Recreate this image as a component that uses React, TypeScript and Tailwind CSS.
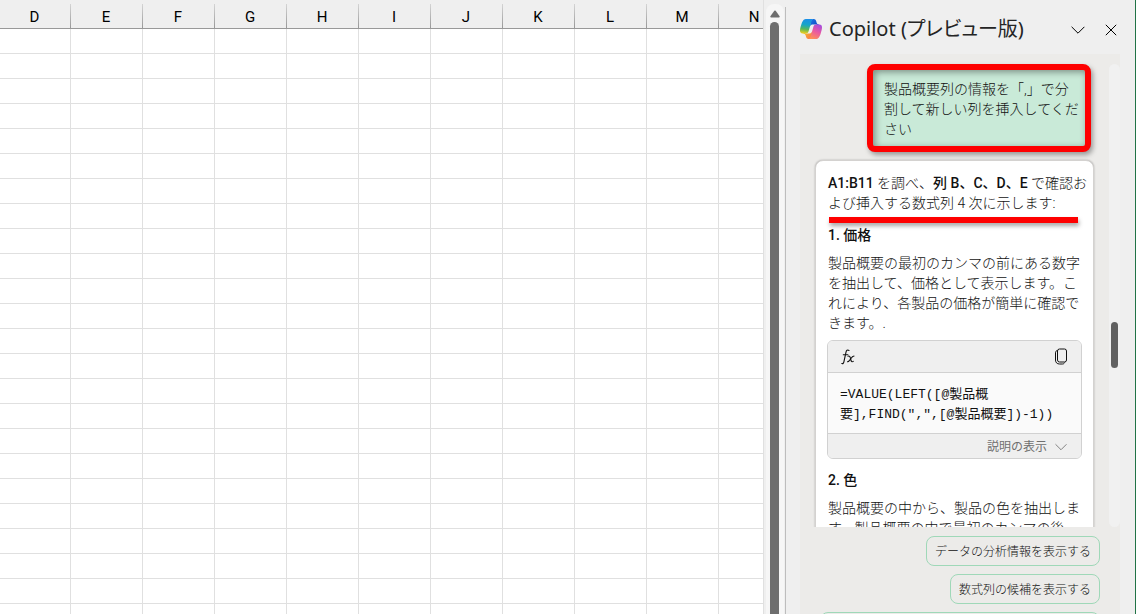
import * as React from "react";

const COLUMNS = ["D", "E", "F", "G", "H", "I", "J", "K", "L", "M", "N"];
const ROW_COUNT = 24;

const SUGGESTIONS = ["データの分析情報を表示する", "数式列の候補を表示する"];

// Icons

function CopilotLogo() {
  return (
    <svg viewBox="0 0 48 48" className="h-6 w-6 shrink-0" aria-hidden="true">
      <defs>
        <linearGradient id="cp-top" x1="38" y1="16" x2="26" y2="5" gradientUnits="userSpaceOnUse">
          <stop offset="0" stopColor="#0a4bc4" />
          <stop offset="1" stopColor="#1b6fe0" />
        </linearGradient>
        <linearGradient id="cp-bottom" x1="10" y1="33" x2="22" y2="44" gradientUnits="userSpaceOnUse">
          <stop offset="0" stopColor="#f4b62b" />
          <stop offset="1" stopColor="#fb7a4b" />
        </linearGradient>
        <linearGradient id="cp-left" x1="15" y1="4" x2="11" y2="33" gradientUnits="userSpaceOnUse">
          <stop offset="0" stopColor="#1a8fe8" />
          <stop offset="0.4" stopColor="#16a5c8" />
          <stop offset="0.7" stopColor="#57b75a" />
          <stop offset="1" stopColor="#f0cf1e" />
        </linearGradient>
        <linearGradient id="cp-right" x1="40" y1="14" x2="26" y2="44" gradientUnits="userSpaceOnUse">
          <stop offset="0" stopColor="#a24be0" />
          <stop offset="0.5" stopColor="#ea5aa0" />
          <stop offset="1" stopColor="#ff9256" />
        </linearGradient>
      </defs>
      <path
        fill="url(#cp-top)"
        d="M34.142 7.325A4.63 4.63 0 0 0 29.7 4h-1.35a4.63 4.63 0 0 0-4.554 3.794L21.48 20.407l.575-1.965a4.63 4.63 0 0 1 4.444-3.33h7.853l3.294 1.282 3.175-1.283h-.926a4.63 4.63 0 0 1-4.443-3.325z"
      />
      <path
        fill="url(#cp-bottom)"
        d="M14.33 40.656A4.63 4.63 0 0 0 18.779 44h2.87a4.63 4.63 0 0 0 4.629-4.51l.312-12.163-.654 2.233a4.63 4.63 0 0 1-4.443 3.329h-7.919l-2.823-1.532-3.057 1.532h.912a4.63 4.63 0 0 1 4.447 3.344z"
      />
      <path
        fill="url(#cp-left)"
        d="M29.5 4H13.46c-4.583 0-7.332 6.057-9.165 12.113C2.123 23.29-.72 32.885 7.503 32.885h6.925a4.63 4.63 0 0 0 4.456-3.358 2077 2077 0 0 1 4.971-17.156c.843-2.843 1.544-5.284 2.621-6.805C27.08 4.714 28.086 4 29.5 4z"
      />
      <path
        fill="url(#cp-right)"
        d="M18.498 44h16.04c4.582 0 7.332-6.058 9.165-12.115 2.172-7.177 5.013-16.775-3.208-16.775h-6.926a4.63 4.63 0 0 0-4.456 3.358 2084 2084 0 0 1-4.972 17.16c-.842 2.844-1.544 5.285-2.62 6.806-.604.852-1.61 1.566-3.023 1.566z"
      />
    </svg>
  );
}

function ChevronDown({ className }: { className: string }) {
  return (
    <svg viewBox="0 0 14 8" className={className} fill="none" stroke="currentColor" aria-hidden="true">
      <path d="M.6.8 7 7.2 13.4.8" />
    </svg>
  );
}

function CloseIcon() {
  return (
    <svg viewBox="0 0 12 12" className="h-3 w-3" fill="none" stroke="currentColor" aria-hidden="true">
      <path d="m.8.8 10.4 10.4M11.2.8.8 11.2" />
    </svg>
  );
}

function FxIcon() {
  return (
    <svg viewBox="0 0 14 16" className="h-4 w-3.5" fill="none" stroke="currentColor" strokeLinecap="round" aria-hidden="true">
      <path strokeWidth="1.1" d="M8 1.4C6.4.5 5.4 1.4 5 3.2L3 12.4c-.3 1.7-1 2.5-2.2 2.1M2.3 5.8h4.6" />
      <path strokeWidth="1.1" d="M7 7.2c1.4-.5 2 .2 2.4 1.8l.5 2c.4 1.6 1.2 2.2 2.4 1.4M13 7c-1.4 0-2 .8-3.3 2.8C8.500 11.800 8 12.700 6.500 12.700" />
    </svg>
  );
}

function CopyIcon() {
  return (
    <svg viewBox="0 0 14 17" className="h-[17px] w-3.5" fill="none" stroke="currentColor" aria-hidden="true">
      <rect x="3.500" y="1" width="9" height="13" rx="2" />
      <path d="M3.500 2.500C2 2.800 1.500 3.500 1.500 4.800v7.200c0 2.500 1.500 4 4 4h2.800c1.200 0 2-.5 2.300-1.500" />
    </svg>
  );
}

// Worksheet

function Sheet() {
  return (
    <div className="min-w-0 flex-1 overflow-hidden border-r border-[#e0e0e0] bg-white">
      <table className="w-[791px] table-fixed border-separate border-spacing-0">
        <thead>
          <tr>
            {COLUMNS.map((name) => (
              <th
                key={name}
                scope="col"
                className="h-[29px] w-[72px] border-b border-[#999] bg-[#efefef] bg-[linear-gradient(#d4d4d4,#999)] bg-[length:1px_24px] bg-[position:right_bottom] bg-no-repeat pt-1.5 pr-0.5 pb-0 pl-0 font-['Roboto',sans-serif] text-[15px] leading-5 font-normal text-black first:w-[71px]"
              >
                {name}
              </th>
            ))}
          </tr>
        </thead>
        <tbody>
          {Array.from({ length: ROW_COUNT }, (_, row) => (
            <tr key={row}>
              {COLUMNS.map((name) => (
                <td key={name} className="h-[25px] border-r border-b border-[#e0e0e0] p-0" />
              ))}
            </tr>
          ))}
        </tbody>
      </table>
    </div>
  );
}

function SheetScrollbar() {
  return (
    <div className="flex w-[21px] shrink-0 justify-center pt-1">
      <div className="flex w-[18px] flex-col items-center rounded-t-lg bg-[#f6f6f6] pt-1.5">
        <svg viewBox="0 0 10 8" className="mb-1 h-2 w-2.5 shrink-0 fill-[#6e6e6e]" aria-hidden="true">
          <path d="M4.300.8a1 1 0 0 1 1.400 0L9.600 6.200c.3.6 0 1.200-.6 1.200H1c-.6 0-.9-.6-.6-1.200z" />
        </svg>
        <div className="w-[9px] flex-1 rounded-t-full bg-[#6e6e6e]" />
      </div>
    </div>
  );
}

// Copilot pane

function PaneHeader() {
  return (
    <header className="flex h-[54px] shrink-0 items-center pt-1.5 pr-[18px] pl-[13px]">
      <div className="flex flex-1 items-center gap-1.5 pb-0.5">
        <CopilotLogo />
        <h1 className="text-xl leading-7 whitespace-nowrap text-[#242424] [font-feature-settings:'palt']">
          Copilot (プレビュー版)
        </h1>
      </div>
      <button type="button" aria-label="オプション" className="p-1">
        <ChevronDown className="h-2 w-3.5" />
      </button>
      <button type="button" aria-label="閉じる" className="ml-3 p-1 pr-0">
        <CloseIcon />
      </button>
    </header>
  );
}

function UserMessage() {
  return (
    <div className="mr-[3px] w-[224px] self-end rounded-lg border-6 border-[#fe0000] bg-[#c9ead8] pt-[9px] pr-[3px] pb-[7px] pl-[11px] shadow-[2px_3px_5px_rgba(0,0,0,0.35),inset_2px_2px_7px_rgba(0,0,0,0.4)]">
      <p>製品概要列の情報を「,」で分割して新しい列を挿入してください</p>
    </div>
  );
}

function FormulaCard() {
  return (
    <div className="-mx-px mt-[7px] overflow-hidden rounded-md border border-[#d1d1d1] bg-[#fafafa]">
      <div className="flex h-8 items-center justify-between border-b border-[#d1d1d1] bg-[#efefef] px-[13px]">
        <FxIcon />
        <button type="button" aria-label="数式をコピー">
          <CopyIcon />
        </button>
      </div>
      <code className="block px-3 pt-3 pb-2 font-['Liberation_Mono','Noto_Sans_CJK_JP',monospace] text-[13px] leading-5 font-normal">
        =VALUE(LEFT([@製品概要],FIND(",",[@製品概要])-1))
      </code>
      <button
        type="button"
        className="flex h-[25px] w-full items-center justify-end gap-2 border-t border-[#d1d1d1] bg-[#efefef] pt-0.5 pr-3.5 text-xs font-normal text-[#707070]"
      >
        説明の表示
        <ChevronDown className="h-2 w-3" />
      </button>
    </div>
  );
}

function Reply() {
  return (
    <article className="mt-2 w-[279px] self-end rounded-t-lg border border-[#d4d2d0] bg-white px-3 pt-3 shadow-[0_0_2px_rgba(0,0,0,0.3)]">
      <p className="relative -mr-2">
        <b className="font-medium">A1:B11</b> を調べ、<b className="font-medium">列 B、C、D、E</b>{" "}
        で確認および挿入する数式列 4 次に示します:
        <span className="absolute top-11 right-[11px] left-px h-1.5 bg-[#fe0000] shadow-[1px_3px_4px_rgba(0,0,0,0.35)]" />
      </p>
      <h2 className="mt-3 font-medium">1. 価格</h2>
      <p className="mt-2">
        製品概要の最初のカンマの前にある数字を抽出して、価格として表示します。これにより、各製品の価格が簡単に確認できます。.
      </p>
      <FormulaCard />
      <h2 className="mt-[11px] font-medium">2. 色</h2>
      <p className="mt-2">製品概要の中から、製品の色を抽出します。製品概要の中で最初のカンマの後</p>
    </article>
  );
}

function Conversation() {
  return (
    <div className="flex min-h-0 flex-1 overflow-hidden pt-2.5">
      <div className="flex min-w-0 flex-1 flex-col pr-[15px] font-['Roboto','Noto_Sans_CJK_JP',sans-serif] text-sm leading-5 font-light text-[#111]">
        <UserMessage />
        <Reply />
      </div>
      <div className="flex w-[11px] shrink-0 justify-center rounded-full bg-[#f1f1f1] pt-[258px]">
        <div className="h-[46px] w-[7px] rounded-full bg-[#616161]" />
      </div>
    </div>
  );
}

function Suggestions() {
  return (
    <div className="flex max-h-[87px] shrink-0 flex-col items-end gap-2 overflow-hidden pt-[9px] pr-5 text-xs font-light text-[#111]">
      {SUGGESTIONS.map((label) => (
        <button
          key={label}
          type="button"
          className="h-[30px] shrink-0 rounded-lg border border-[#9fd8b8] px-2 pt-0.5 whitespace-nowrap"
        >
          {label}
        </button>
      ))}
      <button
        type="button"
        aria-label="その他の候補"
        className="h-[30px] w-[280px] shrink-0 rounded-lg border border-[#9fd8b8]"
      />
    </div>
  );
}

export default function App() {
  return (
    <div className="flex h-screen overflow-hidden bg-[#efefef] font-['Noto_Sans','Noto_Sans_CJK_JP',sans-serif]">
      <Sheet />
      <SheetScrollbar />
      <div className="mt-[7px] w-px shrink-0 bg-[#bdbdbd]" />
      <aside aria-label="Copilot" className="flex w-[350px] shrink-0 flex-col border-r border-[#217346]">
        <PaneHeader />
        <div className="mr-[15px] ml-3.5 flex min-h-0 flex-1 flex-col bg-[#ecebe9]">
          <Conversation />
          <Suggestions />
        </div>
      </aside>
    </div>
  );
}
